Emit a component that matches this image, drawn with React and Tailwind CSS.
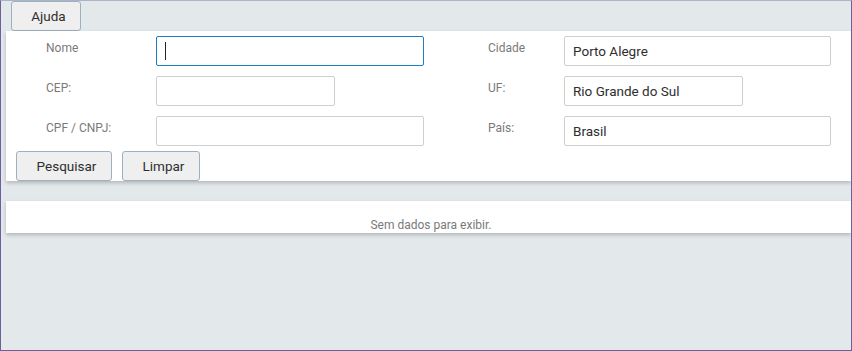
import React from "react";

function Field({ label, value, width, focused, labelW }) {
  return (
    <div className="flex items-start h-[30px]">
      <div className={`${labelW} pt-[4px] text-[12px] leading-[16px] text-[#7a7a7a]`}>{label}</div>
      <div
        className={`${width} h-[30px] bg-white rounded-[2px] border flex items-center px-2 text-[13.5px] text-[#2e2e2e] ${
          focused ? "border-[#1b7fc1]" : "border-[#cfcfcf]"
        }`}
      >
        {focused ? <div className="w-px h-[18px] bg-[#222]" /> : value}
      </div>
    </div>
  );
}

function Btn({ children, w }) {
  return (
    <button
      className={`${w} h-[30px] bg-[#efefef] border border-[#9eafbf] rounded-[3px] text-[13.5px] text-[#2e2e2e] flex items-center justify-center pl-[5px]`}
    >
      {children}
    </button>
  );
}

export default function App() {
  return (
    <div
      className="w-[852px] h-[351px] bg-[#e3e8eb] border border-[#6d5f9e] border-t-[#a9b4c7] flex flex-col overflow-hidden"
      style={{ fontFamily: "Roboto, 'Liberation Sans', sans-serif" }}
    >
      <div className="pl-[10px] h-[30px]">
        <Btn w="w-[70px]">Ajuda</Btn>
      </div>
      <div className="ml-[5px] h-[150px] bg-white shadow-[0_2px_4px_rgba(0,0,0,0.22)] flex flex-col pt-[5px] relative z-10">
        <div className="flex">
          <div className="flex flex-col gap-[10px] pl-[40px] w-[482px]">
            <Field label="Nome" labelW="w-[110px]" width="w-[268px]" focused />
            <Field label="CEP:" labelW="w-[110px]" width="w-[179px]" value="" />
            <Field label="CPF / CNPJ:" labelW="w-[110px]" width="w-[268px]" value="" />
          </div>
          <div className="flex flex-col gap-[10px]">
            <Field label="Cidade" labelW="w-[76px]" width="w-[267px]" value="Porto Alegre" />
            <Field label="UF:" labelW="w-[76px]" width="w-[179px]" value="Rio Grande do Sul" />
            <Field label="País:" labelW="w-[76px]" width="w-[267px]" value="Brasil" />
          </div>
        </div>
        <div className="flex gap-[10px] pl-[10px] mt-[5px]">
          <Btn w="w-[96px]">Pesquisar</Btn>
          <Btn w="w-[78px]">Limpar</Btn>
        </div>
      </div>
      <div className="ml-[5px] mt-[20px] h-[32px] bg-white shadow-[0_2px_4px_rgba(0,0,0,0.22)] flex items-end justify-center pb-[1px] pl-[5px]">
        <span className="text-[12px] leading-[14px] text-[#7a7a7a]">Sem dados para exibir.</span>
      </div>
    </div>
  );
}
